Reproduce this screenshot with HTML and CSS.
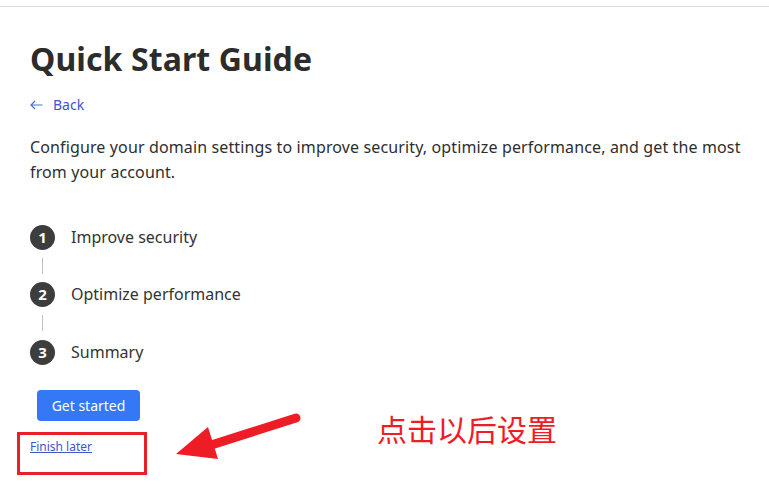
FILE: index.html
```html
<!DOCTYPE html>
<html lang="en">
<head>
<meta charset="utf-8">
<title>Quick Start Guide</title>
<link rel="stylesheet" href="styles.css">
</head>
<body>
<div class="topbar"></div>
<main class="page">
  <h1 class="title">Quick Start Guide</h1>
  <a class="back" href="#">
    <svg class="back-icon" width="13" height="10" viewBox="0 0 13 10"><path d="M12.5 5H1M5 1L1 5l4 4" fill="none" stroke="#4a6fd8" stroke-width="1.2"/></svg>
    <span>Back</span>
  </a>
  <p class="intro">Configure your domain settings to improve security, optimize performance, and get the most from your account.</p>
  <ol class="steps">
    <li class="step"><span class="num">1</span><span class="label">Improve security</span></li>
    <li class="connector"></li>
    <li class="step"><span class="num">2</span><span class="label">Optimize performance</span></li>
    <li class="connector"></li>
    <li class="step"><span class="num">3</span><span class="label">Summary</span></li>
  </ol>
  <button class="start">Get started</button>
  <a class="later" href="#">Finish later</a>
</main>
<div class="note-box"></div>
<svg class="note-arrow" width="140" height="65" viewBox="170 405 140 65">
  <line x1="296" y1="418" x2="205" y2="447" stroke="#ee1c25" stroke-width="9" stroke-linecap="round"/>
  <polygon points="176,454 208,427 218,459" fill="#ee1c25"/>
</svg>
<div class="note-text">点击以后设置</div>
</body>
</html>
```
FILE: styles.css
```css
html, body {
  margin: 0;
  padding: 0;
  background: #ffffff;
}
body {
  font-family: "Noto Sans", "Open Sans", sans-serif;
  color: #333333;
  position: relative;
  width: 769px;
  height: 485px;
  overflow: hidden;
}
.topbar {
  height: 6px;
  border-bottom: 1px solid #d9d9d9;
}
.page {
  padding: 0 0 0 30px;
  display: flex;
  flex-direction: column;
  align-items: flex-start;
}
.title {
  margin: 30px 0 0 0;
  font-size: 32px;
  line-height: 44px;
  font-weight: 700;
  color: #2c2c2c;
  letter-spacing: 0.1px;
}
.back {
  margin-top: 14px;
  display: flex;
  align-items: center;
  gap: 10px;
  color: #3e55cc;
  text-decoration: none;
  font-size: 14px;
  line-height: 20px;
}
.intro {
  margin: 20px 0 0 0;
  width: 720px;
  font-size: 16px;
  line-height: 25px;
  color: #2e2e2e;
  letter-spacing: 0.13px;
}
.steps {
  list-style: none;
  margin: 39px 0 0 0;
  padding: 0;
  display: flex;
  flex-direction: column;
}
.step {
  display: flex;
  align-items: center;
  gap: 16px;
  height: 26px;
}
.num {
  width: 25px;
  height: 25px;
  border-radius: 50%;
  background: #3d3d3d;
  color: #ffffff;
  font-weight: 700;
  font-size: 15px;
  display: flex;
  align-items: center;
  justify-content: center;
}
.label {
  font-size: 16px;
  color: #333333;
}
.connector {
  width: 1px;
  height: 16px;
  margin: 8px 0 7px 12px;
  background: #bdbdbd;
}
.connector:nth-child(4) {
  margin-bottom: 8px;
}
.start {
  margin: 25px 0 0 7px;
  width: 103px;
  height: 31px;
  border: none;
  border-radius: 4px;
  background: #3478f6;
  color: #ffffff;
  font-family: inherit;
  font-size: 14px;
  padding: 0;
  cursor: pointer;
}
.later {
  margin-top: 18px;
  font-size: 12px;
  line-height: 16px;
  color: #3e55cc;
  text-decoration: underline;
}
.note-box {
  position: absolute;
  left: 17px;
  top: 432px;
  width: 124px;
  height: 37px;
  border: 3px solid #e8202a;
}
.note-arrow {
  position: absolute;
  left: 170px;
  top: 405px;
}
.note-text {
  position: absolute;
  left: 377px;
  top: 408px;
  font-family: "Noto Sans CJK SC", sans-serif;
  font-size: 30px;
  line-height: 40px;
  color: #ee1c25;
}
```
